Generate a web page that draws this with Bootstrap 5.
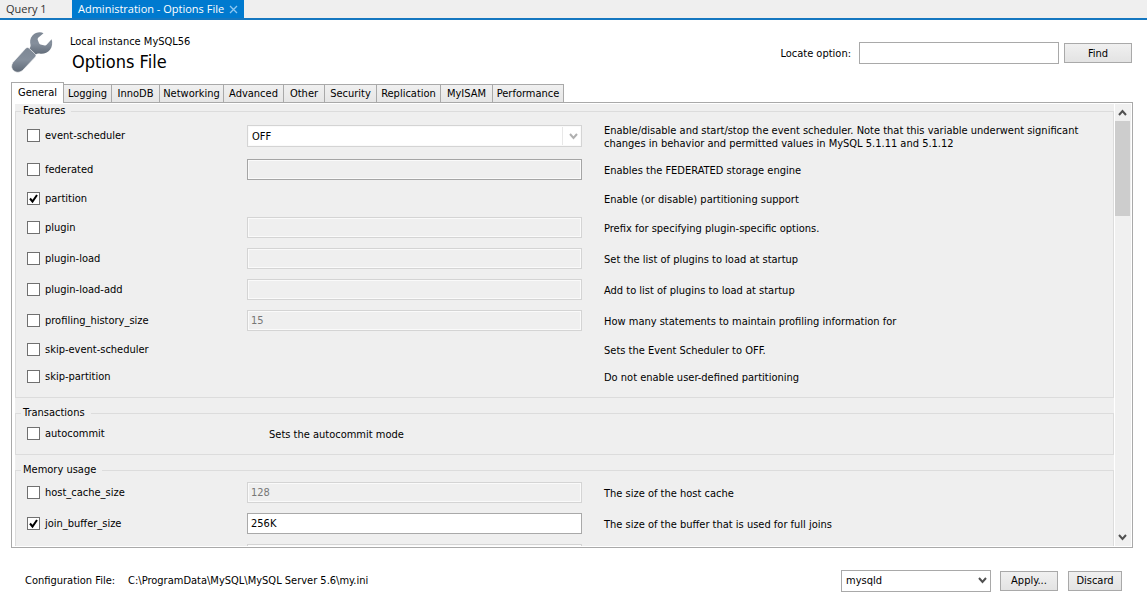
<!DOCTYPE html>
<html lang="en">
<head>
<meta charset="utf-8">
<meta name="viewport" content="width=device-width, initial-scale=1">
<title>Administration - Options File</title>
<link href="https://cdn.jsdelivr.net/npm/bootstrap@5.3.0/dist/css/bootstrap.min.css" rel="stylesheet">
<style>
  body { font: 11px/13px "DejaVu Sans Condensed", "DejaVu Sans", sans-serif; color: #000; background: #fff; }
  .window-tabs { height: 20px; background: #efefef; border-bottom: 2px solid #1577c0; font: 11px/17px "Open Sans", sans-serif; }
  .window-tabs a { color: #333; text-decoration: none; height: 18px; padding: 0 6px; white-space: nowrap; }
  .window-tabs .query-tab { width: 72px; }
  .window-tabs .current { background: #007acf; color: #fff; width: 172px; }
  .page-head { padding: 11px 15px 10px 11px; height: 62px; }
  .page-head h1 { font-size: 18px; line-height: 22px; margin: 3px 0 0 2px; }
  .page-head .wrench { margin-right: 17px; }
  .page-head form { margin-top: 11px; }
  .box { border: 1px solid #a9a9a9; border-radius: 0; background-color: #fff; color: #000; font: inherit; padding: 0 3px; min-width: 0; height: 21px; }
  .box:disabled { border-color: #d4d4d4; background-color: #efefef; color: #777; box-shadow: inset 0 0 0 1px #fafafa; opacity: 1; }
  .box.strong:disabled { border-color: #a5a5a5; }
  .find-box { width: 200px; height: 22px; }
  select.box { appearance: none; padding-left: 4px; background-repeat: no-repeat; background-position: right 3px center;
    background-image: url("data:image/svg+xml,%3Csvg xmlns='http://www.w3.org/2000/svg' width='9' height='7'%3E%3Cpath d='M1 1l3.500 4L8 1' fill='none' stroke='%23505050' stroke-width='2'/%3E%3C/svg%3E"); }
  select.box.wide:disabled { height: 22px; background-color: #fff; color: #000;
    background-image: linear-gradient(#e8e8e8, #e8e8e8), url("data:image/svg+xml,%3Csvg xmlns='http://www.w3.org/2000/svg' width='9' height='7'%3E%3Cpath d='M1 1l3.500 4L8 1' fill='none' stroke='%23b0b0b0' stroke-width='2'/%3E%3C/svg%3E");
    background-size: 1px 18px, 9px 7px; background-position: right 18px center, right 3px center; }
  .push { height: 20px; border: 1px solid #a9a9a9; border-radius: 0; background: linear-gradient(#f0f0f0, #e3e3e3); color: #000; font: inherit; padding: 0; }
  .push:hover { background: #e3eef9; color: #000; border-color: #7eb4ea; }
  .push.find { width: 68px; margin-left: 5px; }
  .push.apply { width: 58px; margin-left: 9px; }
  .push.discard { width: 54px; margin-left: 10px; }
  .group-tabs { padding-left: 11px; height: 20px; position: relative; z-index: 1; }
  .group-tabs button { border: 1px solid #a9a9a9; border-left-width: 0; border-bottom: 0; background: linear-gradient(#f0f0f0, #e6e6e6); color: #000; font: inherit; width: 48px; height: 18px; padding: 0; text-align: center; border-radius: 0; white-space: nowrap; }
  .group-tabs .w-s { width: 41px; }
  .group-tabs .w-m { width: 52px; }
  .group-tabs .w-l { width: 60px; }
  .group-tabs .w-xl { width: 64px; }
  .group-tabs .w-xxl { width: 71px; }
  .group-tabs button.active { background: #fff; width: 53px; height: 21px; border-left-width: 1px; margin-bottom: -1px; padding-bottom: 2px; }
  .panel { margin: 0 14px 0 11px; border: 1px solid #a9a9a9; padding: 1px 1px 1px 3px; min-height: 0; }
  .options { background: #efefef; }
  .options fieldset { border: 1px solid #dcdcdc; padding: 0 0 7px; margin-bottom: 8px; min-width: 0; }
  .options legend { float: none; width: auto; font-size: 11px; line-height: 14px; margin: 0 0 0 5px; padding: 0 6px 0 2px; }
  .opt { display: grid; grid-template-columns: 220px minmax(0, 335px) minmax(0, 1fr); align-items: center; height: 31px; padding: 0 20px 0 11px; }
  .opt.plain { height: 27px; }
  .opt.tall { height: 36px; }
  .opt .desc { grid-column: 3; padding: 2px 0 0 22px; }
  .opt.tall .desc { padding-top: 1px; }
  .opt.inline-desc .desc { grid-column: 2 / 4; }
  .opt .form-check-input { width: 13px; height: 13px; margin: 0; border: 1px solid #707070; border-radius: 0; background-color: #fff; flex: none; }
  .opt .form-check-input:checked { background-color: #fff; background-size: 11px 11px;
    background-image: url("data:image/svg+xml,%3Csvg xmlns='http://www.w3.org/2000/svg' width='11' height='11'%3E%3Cpath d='M2 5.500l2.500 3L9 2' fill='none' stroke='%23000' stroke-width='2'/%3E%3C/svg%3E"); }
  .opt label { padding-left: 5px; }
  .opt > .d-flex { padding-bottom: 1px; }
  .scroll { width: 17px; background: #f0f0f0; border-left: 1px solid #fff; padding-right: 1px; flex: none; }
  .scroll svg { display: block; width: 15px; height: 17px; }
  .thumb { height: 95px; background: #cdcdcd; }
  .page-foot { height: 65px; padding: 0 25px; }
  .page-foot .path { margin-left: 13px; }
  .page-foot .group-box { width: 150px; height: 22px; }
</style>
</head>
<body>
<div class="d-flex flex-column vh-100 overflow-hidden">
  <nav class="window-tabs d-flex flex-shrink-0">
    <a href="#" class="query-tab">Query 1</a>
    <a href="#" class="current d-flex justify-content-between">Administration - Options File
      <svg width="9" height="18" viewBox="0 0 9 18" aria-hidden="true"><path d="M1 6l7 7M8 6l-7 7" stroke="#8fc8f2" stroke-width="1.3"/></svg></a>
  </nav>

  <header class="page-head d-flex flex-shrink-0 align-items-start">
    <svg width="42" height="42" viewBox="0 0 42 42" class="wrench" aria-hidden="true">
      <defs><linearGradient id="steel" x1="0" y1="0" x2="0" y2="1"><stop offset="0" stop-color="#7d8794"/><stop offset=".5" stop-color="#858f9c"/><stop offset="1" stop-color="#606a77"/></linearGradient></defs>
      <path fill="url(#steel)" d="M32.500 2.200C30 .7 24.500 1 21.500 4.500C18.800 7.600 18.800 11 19.600 14.200Q19.800 16 18.200 17.800L24.600 23.800Q26.300 22 28.500 22.600C32 23.500 36.500 22 39 18.800C41.200 16 41.800 11.500 40.600 8.300L35.600 13.800Q34.800 14.600 33.800 14.400L29.500 13.400Q28.400 13.100 28 12L26.700 8.700Q26.400 7.600 27.200 6.800Z"/>
      <path fill="url(#steel)" stroke="#fff" stroke-width=".6" d="M15 17q1.500-1.200 2.800 0l6.600 6.200q1.200 1.300 0 2.700L11.500 39.500C5.500 44.500-2.500 38 1.800 31.500z"/>
    </svg>
    <div class="flex-grow-1 pt-1">
      <div>Local instance MySQL56</div>
      <h1 class="fw-normal">Options File</h1>
    </div>
    <form class="d-flex align-items-center">
      <label for="locate" class="me-2">Locate option:</label>
      <input id="locate" type="text" class="box find-box">
      <button type="button" class="btn push find">Find</button>
    </form>
  </header>

  <div class="group-tabs d-flex flex-shrink-0 align-items-end" role="tablist">
    <button type="button" class="active" role="tab">General</button>
    <button type="button" role="tab">Logging</button>
    <button type="button" role="tab">InnoDB</button>
    <button type="button" class="w-xl" role="tab">Networking</button>
    <button type="button" class="w-l" role="tab">Advanced</button>
    <button type="button" class="w-s" role="tab">Other</button>
    <button type="button" class="w-m" role="tab">Security</button>
    <button type="button" class="w-xl" role="tab">Replication</button>
    <button type="button" class="w-m" role="tab">MyISAM</button>
    <button type="button" class="w-xxl" role="tab">Performance</button>
  </div>

  <main class="panel d-flex flex-grow-1">
    <div class="options flex-grow-1 overflow-hidden">
      <fieldset>
        <legend>Features</legend>
        <div class="opt tall">
          <div class="d-flex align-items-center"><input class="form-check-input" type="checkbox" id="o1"><label for="o1">event-scheduler</label></div>
          <select class="box wide" disabled aria-label="event-scheduler value"><option>OFF</option></select>
          <div class="desc">Enable/disable and start/stop the event scheduler. Note that this variable underwent significant changes in behavior and permitted values in MySQL 5.1.11 and 5.1.12</div>
        </div>
        <div class="opt">
          <div class="d-flex align-items-center"><input class="form-check-input" type="checkbox" id="o2"><label for="o2">federated</label></div>
          <input type="text" class="box strong" disabled aria-label="federated value">
          <div class="desc">Enables the FEDERATED storage engine</div>
        </div>
        <div class="opt plain">
          <div class="d-flex align-items-center"><input class="form-check-input" type="checkbox" id="o3" checked><label for="o3">partition</label></div>
          <div class="desc">Enable (or disable) partitioning support</div>
        </div>
        <div class="opt">
          <div class="d-flex align-items-center"><input class="form-check-input" type="checkbox" id="o4"><label for="o4">plugin</label></div>
          <input type="text" class="box" disabled aria-label="plugin value">
          <div class="desc">Prefix for specifying plugin-specific options.</div>
        </div>
        <div class="opt">
          <div class="d-flex align-items-center"><input class="form-check-input" type="checkbox" id="o5"><label for="o5">plugin-load</label></div>
          <input type="text" class="box" disabled aria-label="plugin-load value">
          <div class="desc">Set the list of plugins to load at startup</div>
        </div>
        <div class="opt">
          <div class="d-flex align-items-center"><input class="form-check-input" type="checkbox" id="o6"><label for="o6">plugin-load-add</label></div>
          <input type="text" class="box" disabled aria-label="plugin-load-add value">
          <div class="desc">Add to list of plugins to load at startup</div>
        </div>
        <div class="opt">
          <div class="d-flex align-items-center"><input class="form-check-input" type="checkbox" id="o7"><label for="o7">profiling_history_size</label></div>
          <input type="text" class="box" disabled value="15" aria-label="profiling_history_size value">
          <div class="desc">How many statements to maintain profiling information for</div>
        </div>
        <div class="opt plain">
          <div class="d-flex align-items-center"><input class="form-check-input" type="checkbox" id="o8"><label for="o8">skip-event-scheduler</label></div>
          <div class="desc">Sets the Event Scheduler to OFF.</div>
        </div>
        <div class="opt plain">
          <div class="d-flex align-items-center"><input class="form-check-input" type="checkbox" id="o9"><label for="o9">skip-partition</label></div>
          <div class="desc">Do not enable user-defined partitioning</div>
        </div>
      </fieldset>
      <fieldset>
        <legend>Transactions</legend>
        <div class="opt plain inline-desc">
          <div class="d-flex align-items-center"><input class="form-check-input" type="checkbox" id="o10"><label for="o10">autocommit</label></div>
          <div class="desc">Sets the autocommit mode</div>
        </div>
      </fieldset>
      <fieldset>
        <legend>Memory usage</legend>
        <div class="opt">
          <div class="d-flex align-items-center"><input class="form-check-input" type="checkbox" id="o11"><label for="o11">host_cache_size</label></div>
          <input type="text" class="box" disabled value="128" aria-label="host_cache_size value">
          <div class="desc">The size of the host cache</div>
        </div>
        <div class="opt">
          <div class="d-flex align-items-center"><input class="form-check-input" type="checkbox" id="o12" checked><label for="o12">join_buffer_size</label></div>
          <input type="text" class="box" value="256K" aria-label="join_buffer_size value">
          <div class="desc">The size of the buffer that is used for full joins</div>
        </div>
        <div class="opt">
          <span></span>
          <input type="text" class="box" disabled aria-label="next option value">
        </div>
      </fieldset>
    </div>
    <div class="scroll d-flex flex-column" aria-hidden="true">
      <svg viewBox="0 0 15 17"><path d="M4 11l3.500-4L11 11" fill="none" stroke="#505050" stroke-width="2"/></svg>
      <div class="thumb"></div>
      <svg class="mt-auto" viewBox="0 0 15 17"><path d="M4 6l3.500 4L11 6" fill="none" stroke="#505050" stroke-width="2"/></svg>
    </div>
  </main>

  <footer class="page-foot d-flex flex-shrink-0 align-items-center">
    <span>Configuration File:</span>
    <span class="path me-auto">C:\ProgramData\MySQL\MySQL Server 5.6\my.ini</span>
    <select class="box group-box" aria-label="Configuration group"><option>mysqld</option></select>
    <button type="button" class="btn push apply">Apply...</button>
    <button type="button" class="btn push discard">Discard</button>
  </footer>
</div>
<script src="https://cdn.jsdelivr.net/npm/bootstrap@5.3.0/dist/js/bootstrap.bundle.min.js"></script>
</body>
</html>
